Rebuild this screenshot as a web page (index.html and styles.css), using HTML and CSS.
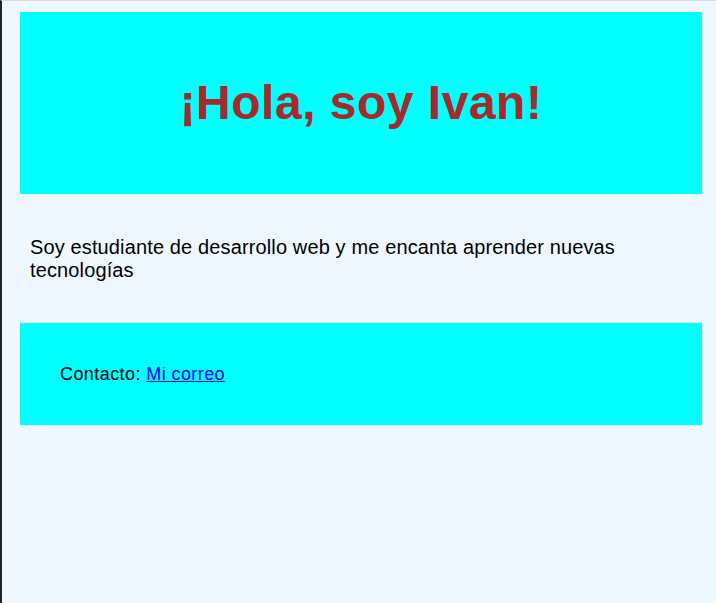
FILE: index.html
```html
<!DOCTYPE html>
<html lang="es">
<head>
<meta charset="utf-8">
<title>Ivan</title>
<link rel="stylesheet" href="styles.css">
</head>
<body>
<div class="page">
  <header class="hero">
    <h1 class="hero-title">¡Hola, soy Ivan!</h1>
  </header>
  <main class="intro">
    <p class="intro-text">Soy estudiante de desarrollo web y me encanta aprender nuevas tecnologías</p>
  </main>
  <footer class="contact">
    <p class="contact-text">Contacto: <a class="contact-link" href="#">Mi correo</a></p>
  </footer>
</div>
</body>
</html>
```
FILE: styles.css
```css
html, body {
  margin: 0;
  height: 100%;
}
body {
  background: #f0f8ff;
  font-family: "Liberation Sans", Arial, sans-serif;
  border-left: 2px solid #232323;
  border-top: 1px solid #dcdcdc;
  box-sizing: border-box;
}
.page {
  padding: 11px 14px 0 18px;
}
.hero {
  background: #00ffff;
  height: 182px;
  display: flex;
  align-items: center;
  justify-content: center;
}
.hero-title {
  margin: 0;
  font-size: 48px;
  font-weight: bold;
  color: #a52a2a;
  line-height: 56px;
  letter-spacing: 0.5px;
}
.intro {
  padding: 42px 10px 41px;
}
.intro-text {
  margin: 0;
  font-size: 20px;
  line-height: 23px;
  color: #000;
  letter-spacing: 0.13px;
}
.contact {
  background: #00ffff;
  height: 102px;
  padding: 0 40px;
  display: flex;
  align-items: center;
}
.contact-text {
  margin: 0;
  font-size: 18px;
  color: #000;
  letter-spacing: 0.42px;
}
.contact-link {
  color: #0000ee;
}
```
